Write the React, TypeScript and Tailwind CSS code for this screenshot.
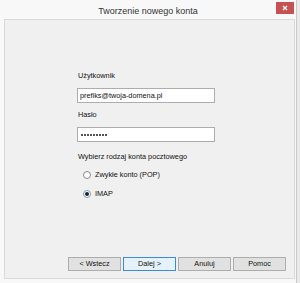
import React from "react";

export default function App() {
  const font = { fontFamily: '"Liberation Sans", Arial, sans-serif' };
  const dots = Array.from({ length: 9 });
  return (
    <div className="w-[300px] h-[283px] bg-[#e9e9e9] overflow-hidden" style={font}>
      <div className="w-[297px] h-[283px] bg-[#f8f8f8] border-r border-[#c9c9c9] flex flex-col">
        <div className="relative h-[19px] shrink-0 flex items-center justify-center">
          <span className="text-[9px] text-[#333333] leading-none mt-[3px]">Tworzenie nowego konta</span>
          <div className="absolute left-[276px] top-[2px] w-[18px] h-[12px] bg-[#c75050] flex items-center justify-center">
            <svg width="6" height="6" viewBox="0 0 6 6">
              <path d="M1 1L5 5M5 1L1 5" stroke="#ffffff" strokeWidth="1.3" />
            </svg>
          </div>
        </div>
        <div className="ml-[4px] w-[291px] h-[260px] bg-[#f0f0f0] border border-[#dadada] flex flex-col">
          <div className="pl-[72px] pt-[51px] flex flex-col text-[7.3px] text-[#111111]">
            <div className="h-[10px] leading-[10px] pl-[1px]">Użytkownik</div>
            <div className="mt-[7px] w-[138px] h-[15px] bg-white border border-[#adadad] flex items-center pl-[2px] leading-none">
              prefiks@twoja-domena.pl
            </div>
            <div className="mt-[7px] h-[10px] leading-[10px] pl-[1px]">Hasło</div>
            <div className="mt-[7px] w-[138px] h-[15px] bg-white border border-[#adadad] flex items-center pl-[3px] gap-[1px]">
              {dots.map((_, i) => (
                <div key={i} className="w-[2px] h-[2px] rounded-full bg-[#1a1a1a]" />
              ))}
            </div>
            <div className="mt-[10px] h-[10px] leading-[10px] pl-[1px]">Wybierz rodzaj konta pocztowego</div>
            <div className="mt-[8px] h-[10px] flex items-center pl-[6px] gap-[4px]">
              <div className="w-[8px] h-[8px] rounded-full border border-[#8a8a8a] bg-white" />
              <span className="leading-none">Zwykłe konto (POP)</span>
            </div>
            <div className="mt-[9px] h-[10px] flex items-center pl-[6px] gap-[4px]">
              <div className="w-[8px] h-[8px] rounded-full border border-[#7a9cc0] bg-white flex items-center justify-center">
                <div className="w-[4px] h-[4px] rounded-full bg-[#202020]" />
              </div>
              <span className="leading-none">IMAP</span>
            </div>
          </div>
          <div className="mt-auto mb-[7px] ml-[63px] flex gap-[2px] text-[7.3px] text-[#111111]">
            <button className="w-[53px] h-[14px] bg-[#e1e1e1] border border-[#adadad] leading-none">&lt; Wstecz</button>
            <button className="w-[53px] h-[14px] bg-[#e5f1fb] border border-[#3c8ad8] leading-none">Dalej &gt;</button>
            <button className="w-[53px] h-[14px] bg-[#e1e1e1] border border-[#adadad] leading-none">Anuluj</button>
            <button className="w-[53px] h-[14px] bg-[#e1e1e1] border border-[#adadad] leading-none">Pomoc</button>
          </div>
        </div>
      </div>
    </div>
  );
}
